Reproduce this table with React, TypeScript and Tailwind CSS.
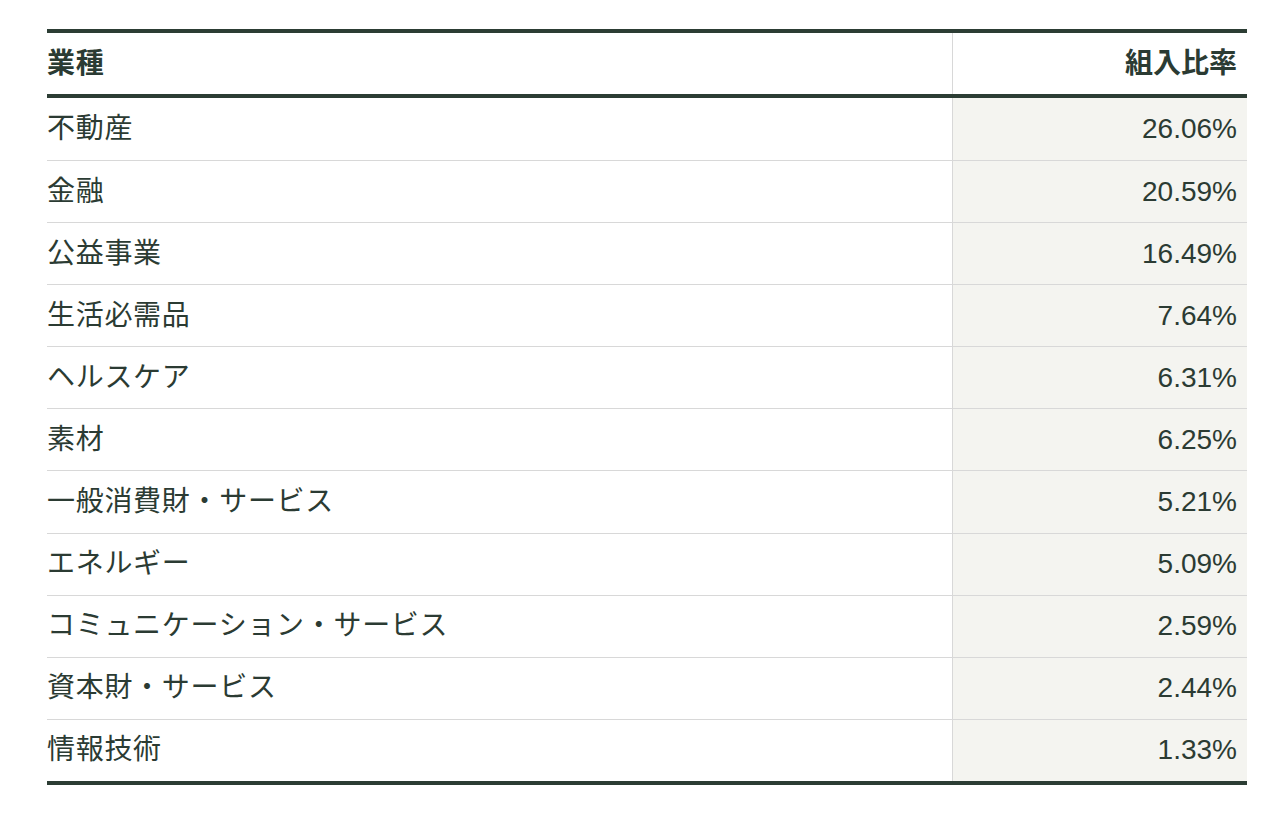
const rows: [string, string][] = [
  ['不動産', '26.06%'],
  ['金融', '20.59%'],
  ['公益事業', '16.49%'],
  ['生活必需品', '7.64%'],
  ['ヘルスケア', '6.31%'],
  ['素材', '6.25%'],
  ['一般消費財・サービス', '5.21%'],
  ['エネルギー', '5.09%'],
  ['コミュニケーション・サービス', '2.59%'],
  ['資本財・サービス', '2.44%'],
  ['情報技術', '1.33%'],
]

export default function App() {
  const last = rows.length - 1
  return (
    <div
      className="min-h-screen bg-white pt-[29px] pl-[47px] text-[#2b3b33]"
      style={{ fontFamily: '"Liberation Sans", "Noto Sans CJK JP", sans-serif' }}
    >
      <table className="w-[1200px] border-collapse border-t-4 border-b-4 border-[#2c3d34]">
        <thead>
          <tr className="border-b-4 border-[#2c3d34]">
            <th className="h-[65px] p-0 text-left align-middle text-[28px] font-bold leading-none tracking-[0.7px]">
              業種
            </th>
            <th className="h-[65px] w-[295px] border-l border-[#d8d8d8] pr-[10px] text-right align-middle text-[28px] font-bold leading-none">
              組入比率
            </th>
          </tr>
        </thead>
        <tbody>
          {rows.map(([name, pct], i) => {
            const h = i === 0 ? 'h-[64.5px]' : i === last ? 'h-[63.5px]' : 'h-[62.1px]'
            return (
              <tr key={name} className={i < last ? 'border-b border-[#d8d8d8]' : ''}>
                <td className={`${h} p-0 align-middle text-[28px] leading-none tracking-[0.7px]`}>
                  {name}
                </td>
                <td
                  className={`${h} border-l border-[#d8d8d8] bg-[#f4f4f0] pr-[10px] text-right align-middle text-[28px] leading-none`}
                >
                  {pct}
                </td>
              </tr>
            )
          })}
        </tbody>
      </table>
    </div>
  )
}
